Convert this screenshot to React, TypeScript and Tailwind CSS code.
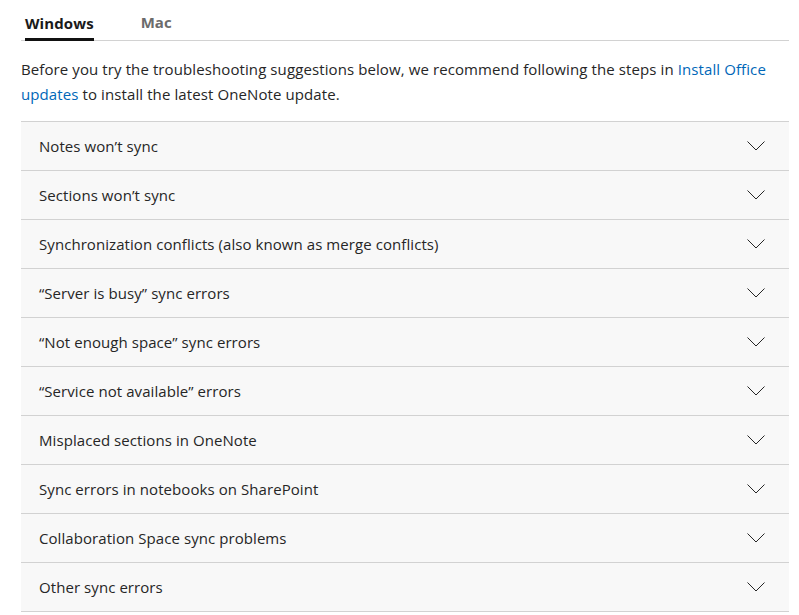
import React from "react";

const items = [
  "Notes won’t sync",
  "Sections won’t sync",
  "Synchronization conflicts (also known as merge conflicts)",
  "“Server is busy” sync errors",
  "“Not enough space” sync errors",
  "“Service not available” errors",
  "Misplaced sections in OneNote",
  "Sync errors in notebooks on SharePoint",
  "Collaboration Space sync problems",
  "Other sync errors",
];

function Chevron() {
  return (
    <svg width="18" height="10" viewBox="0 0 18 10" fill="none">
      <path d="M0.5 0.5 L9 9 L17.5 0.5" stroke="#262626" strokeWidth="1" />
    </svg>
  );
}

export default function App() {
  return (
    <div
      className="bg-white text-[#262626] w-[799px] h-[615px] overflow-hidden"
      style={{ fontFamily: '"Open Sans", "Noto Sans", sans-serif' }}
    >
      <div className="ml-[21px] w-[768px]">
        <div className="flex items-end h-[41px] border-b border-[#d2d2d2] pl-[4px]">
          <div className="flex flex-col">
            <span className="text-[15px] font-bold leading-[20px] pb-[5px] text-[#1a1a1a] tracking-[0.1px]">Windows</span>
            <div className="h-[3px] bg-[#111] -mb-px" />
          </div>
          <span className="ml-[47px] text-[15px] font-bold leading-[20px] pb-[8px] text-[#6b6b6b]">Mac</span>
        </div>
        <p className="mt-[16px] text-[15px] leading-[25px] tracking-[0.1px]">
          Before you try the troubleshooting suggestions below, we recommend following the steps in{" "}
          <span className="text-[#0067b8]">Install Office updates</span> to install the latest OneNote update.
        </p>
        <div className="mt-[14px] border-t border-[#d2d2d2]">
          {items.map((t) => (
            <div
              key={t}
              className="h-[49px] bg-[#f8f8f8] border-b border-[#d2d2d2] flex items-center justify-between pl-[18px] pr-[24px]"
            >
              <span className="text-[15px] tracking-[0.07px]">{t}</span>
              <Chevron />
            </div>
          ))}
        </div>
      </div>
    </div>
  );
}
